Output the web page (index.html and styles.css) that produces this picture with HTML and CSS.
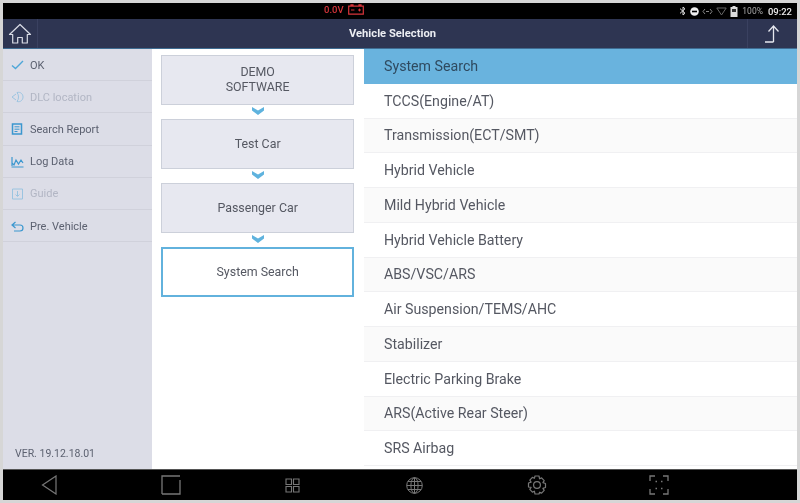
FILE: index.html
```html
<!DOCTYPE html>
<html lang="en">
<head>
<meta charset="utf-8">
<title>Vehicle Selection</title>
<link rel="stylesheet" href="styles.css">
</head>
<body>
<div class="screen">
  <div class="status">
    <div class="volt"><span>0.0V</span>
      <svg class="batt" width="16" height="11" viewBox="0 0 16 11"><path d="M3 2V.8h2V2M11 2V.8h2V2M.7 2.2h14.6v8H.7z" fill="none" stroke="#d8353a" stroke-width="1.2"/><path d="M3 6h3.4M10 6h3M11.5 4.6v2.8" stroke="#d8353a" fill="none"/></svg>
    </div>
    <div class="sys">
      <svg width="8" height="10" viewBox="0 0 8 10"><path d="M1 2.6l5 4.6L4 9V1l2 1.8-5 4.6" fill="none" stroke="#ddd"/></svg>
      <svg width="9" height="9" viewBox="0 0 9 9"><circle cx="4.500" cy="4.500" r="4.300" fill="#eee"/><rect x="2" y="3.700" width="5" height="1.600" fill="#000"/></svg>
      <svg width="11" height="7" viewBox="0 0 11 7"><path d="M3 1L1 3.500 3 6M8 1l2 2.500L8 6M4 3.500h3" fill="none" stroke="#888"/></svg>
      <svg width="11" height="9" viewBox="0 0 11 9"><path d="M.8 1h9.400L5.500 8z" fill="none" stroke="#666"/></svg>
      <svg width="8" height="11" viewBox="0 0 8 11"><path d="M2.500 0h3v1H7.500v10H.5V1h2z" fill="#ddd"/><rect x="2" y="3" width="4" height="3" fill="#333"/></svg>
      <span class="pct">100%</span><span class="clock">09:22</span>
    </div>
  </div>
  <header class="title">
    <div class="home">
      <svg width="24" height="22" viewBox="0 0 24 22"><path d="M1.500 11.500L12 1.500l10.500 10h-3.200v8.500h-5v-5.500h-4.600V20h-5v-8.500z" fill="none" stroke="#d9dce6" stroke-width="1.200" stroke-linejoin="round"/></svg>
    </div>
    <h1>Vehicle Selection</h1>
    <div class="up">
      <svg width="16" height="18" viewBox="0 0 16 18"><path d="M8.500 17H0M8.500 17V1.500M3.500 6.500l5-5.500 5 5.500" fill="none" stroke="#e6e8ef" stroke-width="1.300"/></svg>
    </div>
  </header>
  <main class="body">
    <aside class="side">
      <ul class="menu">
        <li class="item"><svg width="13" height="10" viewBox="0 0 13 10"><path d="M1 5.500l3.500 3L12 1" fill="none" stroke="#4da6d8" stroke-width="1.400"/></svg><span>OK</span></li>
        <li class="item off"><svg width="13" height="12" viewBox="0 0 13 12"><path d="M1 6l4-3M1 6l4 3M6 1.500c4-1 6 2 6 4.500s-2 5.500-6 4.500c2-2.500 2-6.500 0-9z" fill="none" stroke="#4da6d8"/></svg><span>DLC location</span></li>
        <li class="item"><svg width="13" height="12" viewBox="0 0 13 12"><path d="M1.500 1h9v10h-9z" fill="none" stroke="#3b97cf" stroke-width="1.500"/><path d="M3.500 3.800h5M3.500 6.200h5M3.500 8.500h3" stroke="#3b97cf"/></svg><span>Search Report</span></li>
        <li class="item"><svg width="13" height="12" viewBox="0 0 13 12"><path d="M1 1v9M.5 11h12M1 7l2 2 2-5 2.500 4L10 4l2 3" fill="none" stroke="#3b97cf" stroke-width="1.200"/></svg><span>Log Data</span></li>
        <li class="item off"><svg width="13" height="12" viewBox="0 0 13 12"><path d="M1.500 1h10v10h-10z" fill="none" stroke="#4da6d8"/><path d="M6.500 3v5M4.500 6.500l2 2 2-2" fill="none" stroke="#4da6d8"/></svg><span>Guide</span></li>
        <li class="item"><svg width="13" height="11" viewBox="0 0 13 11"><path d="M4.500 1L1 4l3.500 3M1 4h8a3 3 0 0 1 0 6H3" fill="none" stroke="#3b97cf" stroke-width="1.200"/></svg><span>Pre. Vehicle</span></li>
      </ul>
      <div class="ver">VER. 19.12.18.01</div>
    </aside>
    <section class="path">
      <div class="card">DEMO<br>SOFTWARE</div>
      <svg class="chev" width="12" height="8" viewBox="0 0 12 8"><path d="M0 0l6 3.500L12 0v3.500L6 8 0 3.500z" fill="#5fb3de"/></svg>
      <div class="card">Test Car</div>
      <svg class="chev" width="12" height="8" viewBox="0 0 12 8"><path d="M0 0l6 3.500L12 0v3.500L6 8 0 3.500z" fill="#5fb3de"/></svg>
      <div class="card">Passenger Car</div>
      <svg class="chev" width="12" height="8" viewBox="0 0 12 8"><path d="M0 0l6 3.500L12 0v3.500L6 8 0 3.500z" fill="#5fb3de"/></svg>
      <div class="card current">System Search</div>
    </section>
    <ul class="list">
      <li class="row sel">System Search</li>
      <li class="row">TCCS(Engine/AT)</li>
      <li class="row">Transmission(ECT/SMT)</li>
      <li class="row">Hybrid Vehicle</li>
      <li class="row">Mild Hybrid Vehicle</li>
      <li class="row">Hybrid Vehicle Battery</li>
      <li class="row">ABS/VSC/ARS</li>
      <li class="row">Air Suspension/TEMS/AHC</li>
      <li class="row">Stabilizer</li>
      <li class="row">Electric Parking Brake</li>
      <li class="row">ARS(Active Rear Steer)</li>
      <li class="row">SRS Airbag</li>
    </ul>
  </main>
  <nav class="nav">
    <div class="cell"><svg width="16" height="20" viewBox="0 0 16 20"><path d="M15 1L1.500 10 15 19z" fill="none" stroke="#777" stroke-width="1.200"/></svg></div>
    <div class="cell"><svg width="20" height="20" viewBox="0 0 20 20"><path d="M19 1H1v18M1 19h18V5" fill="none" stroke="#777" stroke-width="1.300"/></svg></div>
    <div class="cell"><svg width="15" height="15" viewBox="0 0 15 15"><path d="M1 1h5.500v5.500H1zM8.500 1H14v5.500H8.500zM1 8.500h5.500V14H1zM8.500 8.500H14V14H8.500z" fill="none" stroke="#777" stroke-width="1.100"/></svg></div>
    <div class="cell"><svg width="17" height="17" viewBox="0 0 17 17"><g fill="none" stroke="#777"><circle cx="8.500" cy="8.500" r="7.800"/><ellipse cx="8.500" cy="8.500" rx="3.600" ry="7.800"/><path d="M8.500.7v15.600M.7 8.500h15.600M1.800 4.500h13.400M1.800 12.500h13.400"/></g></svg></div>
    <div class="cell"><svg width="20" height="20" viewBox="0 0 20 20"><g fill="none" stroke="#777" stroke-width="1.200"><circle cx="10" cy="10" r="3.400"/><path d="M8 1h4l.6 2.800 2-.9 2.600 2.700-1.300 2 2.600.9v4l-2.600.9 1.300 2-2.600 2.700-2-.9L12 19H8l-.6-2.800-2 .9-2.600-2.700 1.300-2L1.500 12V8l2.600-.9-1.300-2 2.600-2.700 2 .9z" stroke-linejoin="round"/></g></svg></div>
    <div class="cell"><svg width="20" height="20" viewBox="0 0 20 20"><path d="M1 6V1h5M14 1h5v5M1 14v5h5M19 14v5h-5M6.500 6.500h1.500M12 6.500h1.500M6.500 13.500h1.500M12 13.500h1.500" fill="none" stroke="#777" stroke-width="1.300"/></svg></div>
  </nav>
</div>
</body>
</html>
```

FILE: styles.css
```css
* { box-sizing: border-box; }
html, body { margin: 0; height: 100%; }
body { background: #d6d6d6; padding: 3px; overflow: hidden; font-family: Roboto, "Liberation Sans", sans-serif; }
.screen { height: 497px; display: flex; flex-direction: column; filter: blur(0.6px); background: #fff; }

.status { height: 16px; flex: none; background: #000; display: flex; align-items: center; position: relative; justify-content: flex-end; padding-right: 5px; }
.volt { position: absolute; left: 321px; top: 1px; display: flex; align-items: center; gap: 4px; color: #d8353a; font-size: 9.500px; font-weight: 500; }
.sys { display: flex; align-items: center; gap: 3px; color: #ccc; font-size: 8.500px; }
.pct { color: #aaa; font-size: 8.500px; margin-left: 1px; }
.clock { color: #e8e8e8; font-size: 9.500px; font-weight: 500; margin-left: 2px; }

.title { height: 30px; flex: none; background: #2e3552; display: flex; align-items: center; border-bottom: 1px solid #3f6d93; }
.home { width: 35px; height: 100%; border-right: 1px solid #3a4160; display: flex; align-items: center; justify-content: center; }
.title h1 { flex: 1; margin: 0; text-align: center; color: #eceef3; font-size: 11.200px; font-weight: 700; }
.up { width: 50px; height: 100%; border-left: 1px solid #3a4160; display: flex; align-items: center; justify-content: center; }

.body { flex: 1; min-height: 0; display: flex; }

.side { width: 149px; flex: none; background: #dcdde7; display: flex; flex-direction: column; justify-content: space-between; }
.menu { list-style: none; margin: 0; padding: 0; }
.item { height: 32.200px; display: flex; align-items: center; gap: 6px; padding: 1px 0 0 8px; color: #5c6170; font-size: 11px; border-bottom: 1px solid #d0d1db; }
.item svg { flex: none; }
.item.off { color: #b2b6c4; }
.item.off svg { opacity: .45; }
.ver { padding: 0 0 9px 12px; font-size: 10.500px; color: #5c6170; }

.path { width: 212px; flex: none; padding: 6px 10px 0 9.300px; display: flex; flex-direction: column; align-items: center; }
.card { width: 192.700px; height: 49.700px; flex: none; display: flex; align-items: center; justify-content: center; text-align: center; background: #e7e8f0; border: 1px solid #ccd0da; color: #555862; font-size: 12.400px; line-height: 14.500px; }
.card.current { background: #fff; border: 2px solid #62b2dd; }
.chev { flex: none; margin: 2.500px 0 3.800px; }

.list { flex: 1; list-style: none; margin: 0; padding: 0; overflow: hidden; }
.row { height: 34.750px; display: flex; align-items: center; padding-left: 20px; font-size: 14.200px; color: #555862; background: #fff; border-bottom: 1px solid #f0f0f2; }
.row:nth-child(odd) { background: #fafafa; }
.row.sel { background: #69b3de; color: #2f4a60; border-bottom: 0; }

.nav { height: 31px; flex: none; background: #000; border-top: 1px solid #555; display: flex; align-items: center; justify-content: space-between; padding: 0 128px 0 35.500px; }
.cell { width: 20px; display: flex; justify-content: center; }
```
